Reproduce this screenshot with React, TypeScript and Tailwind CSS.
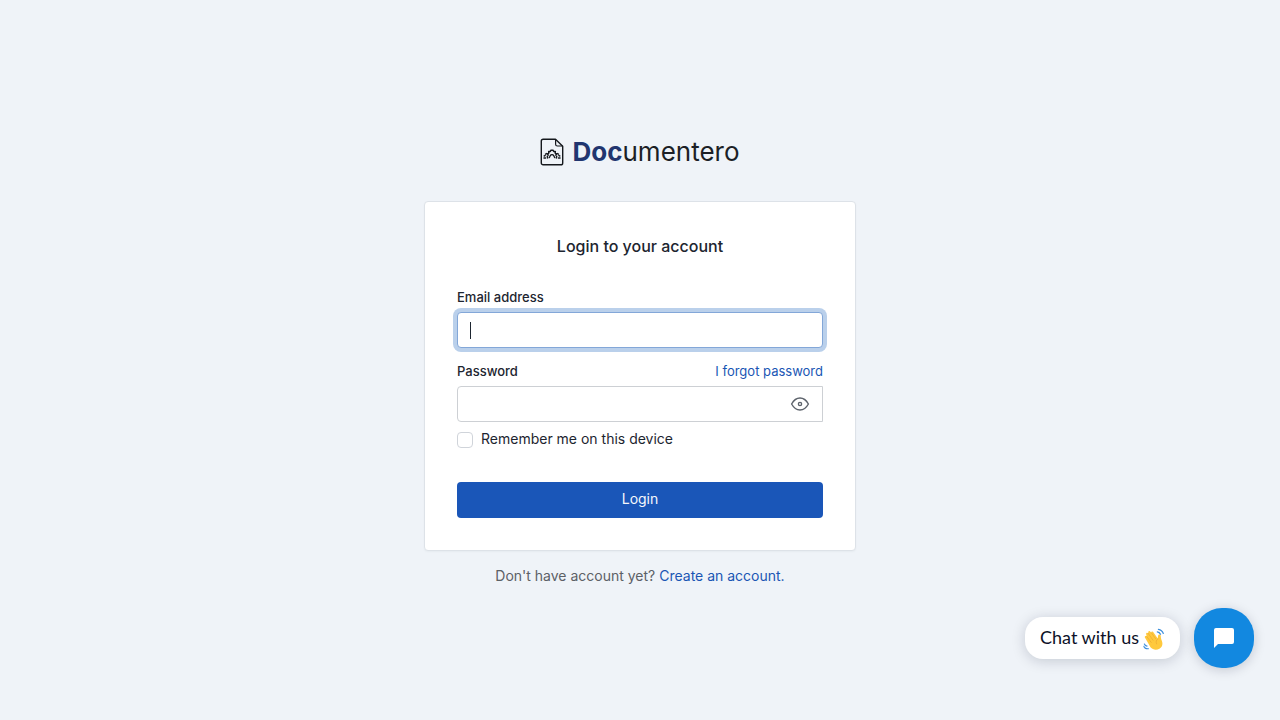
import { useState } from "react";

function FileLogo() {
  return (
    <svg viewBox="0 0 24 28" className="h-7 w-6" fill="none" stroke="#15181d" strokeWidth="1.4" strokeLinejoin="round" strokeLinecap="round" aria-hidden="true">
      <path d="M15.500 1.200H3.200A1.900 1.900 0 0 0 1.300 3.100v21.800a1.900 1.900 0 0 0 1.900 1.900h17.600a1.900 1.900 0 0 0 1.900-1.900V8.200z" />
      <path d="M15.600 1.600v4.600a1.800 1.800 0 0 0 1.800 1.800h5" strokeWidth="1.200" />
      <g strokeWidth="1.500">
        <path d="M8.200 17.200L7.500 15.800l1.300-.8-.1-1.600 1.600.1.700-1.300h2l.7 1.300 1.600-.1-.1 1.600 1.300.8-.7 1.400" />
        <path d="M10.300 17.600a1.900 1.900 0 0 1 3.400 0M10.200 17.800l-.8 1.800M13.800 17.800l.8 1.800" strokeWidth="1.300" />
        <path d="M4 20h1.600M4.200 18l.9-.4M6.700 15.600l-1.200.6M7.300 18.200l.4 1.700" />
        <path d="M20 20h-1.600M19.800 18l-.9-.4M17.300 15.600l1.200.6M16.700 18.200l-.4 1.700" />
      </g>
    </svg>
  );
}

function EyeIcon() {
  return (
    <svg viewBox="0 0 20 16" className="h-4 w-5" fill="none" stroke="#5c626b" strokeWidth="1.4" strokeLinejoin="round" aria-hidden="true">
      <path d="M1.6 8C3.8 4 6.6 2 10 2s6.200 2 8.400 6c-2.200 4-5 6-8.400 6S3.800 12 1.600 8z" />
      <circle cx="10" cy="8" r="1.600" />
    </svg>
  );
}

function WavingHand() {
  return (
    <svg viewBox="0 0 22 22" className="h-[22px] w-[22px]" fill="none" strokeLinecap="round" strokeLinejoin="round" aria-hidden="true">
      <path d="M4.200 13.400L1.900 9.600c-.6-1.200 1-2.200 1.800-1.100L3.200 6.200c-.5-1.300 1.200-2.100 1.900-.9L5.300 4.200c0-1.300 1.600-1.500 2.100-.5l.9 1c0-1.200 1.500-1.500 2.100-.4l4.300 6.300c.3-1 .1-2.200.4-3.100.4-1.400 2.500-1.100 2.600.3.100 2 .5 3.500 1.200 5.300 1.300 3.500.1 6.200-2.500 7.700-3 1.700-6.600 1.200-8.900-1.500z" fill="#ffc93d" />
      <path d="M3.700 8.500l4.500 5.900M5.100 5.300l4.900 6.900M8.300 4.700l4.300 6M15 10.600c-2 1.500-2.300 3.400-1.400 5.300" stroke="#e8a530" strokeWidth=".6" />
      <path d="M14.300 3.900c1.500.2 2.600 1.100 3.200 2.400M15.400 1.400c2.400.3 4.100 1.800 4.900 4.100M4 18.200c-1.300-.3-2.100-1-2.600-2.200M5.200 20.700C2.900 20.900 1 19.800.9 18.300" stroke="#3d8fdc" strokeWidth="1.200" />
    </svg>
  );
}

export default function App() {
  const [email, setEmail] = useState("");
  const [visible, setVisible] = useState(false);
  return (
    <div className="relative flex min-h-screen flex-col items-center justify-center bg-[#eff3f8] px-4 font-['Inter',sans-serif] text-sm text-[#1d2530]">
      <main className="w-full max-w-[432px] pb-px">
        <a href="#" className="mx-auto mb-8 flex h-9 w-fit items-center gap-2 pt-0.5 text-[26px] leading-9 text-[#1c1f26]">
          <FileLogo />
          <span><b className="font-bold text-[#21356f]">Doc</b>umentero</span>
        </a>

        <form className="rounded border border-[#dde2e8] bg-white p-8 shadow-[0_1px_2px_rgba(30,41,59,0.04)]" onSubmit={(e) => e.preventDefault()}>
          <h1 className="mb-[31px] text-center text-base font-medium leading-6">Login to your account</h1>

          <label htmlFor="email" className="mb-[7px] block text-[13px] font-medium leading-4">Email address</label>
          <div className="relative mb-[15px]">
            <input
              id="email"
              type="email"
              autoFocus
              value={email}
              onChange={(e) => setEmail(e.target.value)}
              className={
                "peer block h-9 w-full rounded border border-[#cdd2d8] bg-white px-3 text-sm outline-none focus:border-[#83a7d8] focus:ring-4 focus:ring-[#bad0eb] " +
                (email ? "caret-[#1d2530]" : "caret-transparent")
              }
            />
            {!email && <span aria-hidden="true" className="pointer-events-none absolute inset-y-0 left-[13px] my-auto hidden h-[17px] w-px bg-[#1d2530] peer-focus:block" />}
          </div>

          <div className="mb-[7px] flex justify-between text-[13px] leading-4">
            <label htmlFor="password" className="font-medium">Password</label>
            <a href="#" className="text-[#1a56b4]">I forgot password</a>
          </div>
          <div className="flex h-9 rounded-l border border-[#cdd0d4] bg-white">
            <input id="password" type={visible ? "text" : "password"} className="min-w-0 flex-1 bg-transparent px-3 text-sm outline-none" />
            <button type="button" aria-label="Show password" className="px-3" onClick={() => setVisible(!visible)}>
              <EyeIcon />
            </button>
          </div>

          <label className="mt-[7px] mb-[33px] flex h-5 items-center gap-2 leading-5">
            <input type="checkbox" className="mt-0.5 size-4 appearance-none rounded border border-[#d0d4da] bg-white checked:bg-[#1a56b8]" />
            Remember me on this device
          </label>

          <button type="submit" className="flex h-9 w-full items-center justify-center rounded bg-[#1a56b8] pb-0.5 text-[#f5f8fc]">Login</button>
        </form>

        <p className="mt-[15px] text-center leading-5 text-[#5c6066]">
          Don't have account yet? <a href="#" className="text-[#1a56b4]">Create an account.</a>
        </p>
      </main>

      <aside className="absolute right-[26px] bottom-[52px] flex items-center gap-3.5">
        <button type="button" className="flex h-[42px] items-center gap-1 rounded-[18px] bg-white px-[15px] pb-0.5 font-['Lato',sans-serif] text-lg text-[#0c1128] shadow-[0_2px_14px_rgba(0,18,46,0.18)]">
          Chat with us
          <span className="pt-1"><WavingHand /></span>
        </button>
        <button type="button" aria-label="Open chat" className="flex size-[60px] items-center justify-center rounded-[28px] bg-[#1288e0] shadow-[0_2px_12px_rgba(0,18,46,0.18)]">
          <svg viewBox="0 0 20 20" className="size-5" fill="#fff" aria-hidden="true">
            <path d="M2 0h16a2 2 0 0 1 2 2v12a2 2 0 0 1-2 2H4l-4 4V2a2 2 0 0 1 2-2z" />
          </svg>
        </button>
      </aside>
    </div>
  );
}
